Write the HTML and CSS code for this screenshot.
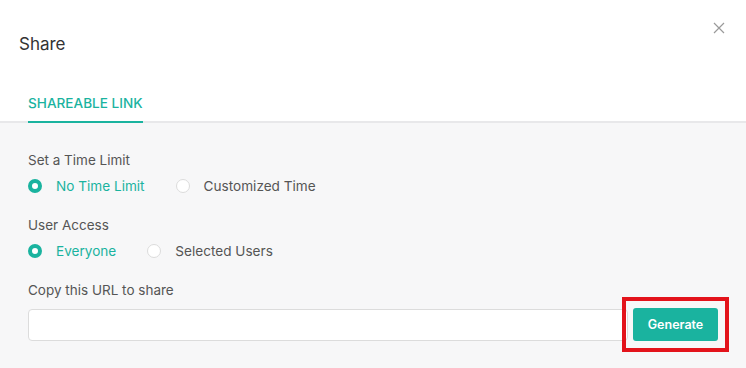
FILE: index.html
```html
<!DOCTYPE html>
<html lang="en">
<head>
    <meta charset="UTF-8">
    <meta name="viewport" content="width=device-width, initial-scale=1.0">
    <title>Share</title>
    <link rel="stylesheet" href="styles.css">
</head>
<body>

    <div class="modal">
        <!-- Cabecera -->
        <div class="modal-header">
            <h2 class="modal-title">Share</h2>
            <button class="close-btn" aria-label="Close">
                <svg width="12" height="12" viewBox="0 0 12 12">
                    <path d="M1 1 L11 11 M11 1 L1 11" stroke="#9a9a9a" stroke-width="1.2" fill="none"/>
                </svg>
            </button>
        </div>

        <div class="tabs">
            <span class="tab active">SHAREABLE LINK</span>
        </div>

        <!-- Contenido -->
        <div class="modal-body">
            <div class="group">
                <div class="group-label">Set a Time Limit</div>
                <div class="radio-row">
                    <label class="radio checked"><span class="dot"></span>No Time Limit</label>
                    <label class="radio"><span class="dot"></span>Customized Time</label>
                </div>
            </div>

            <div class="group">
                <div class="group-label">User Access</div>
                <div class="radio-row">
                    <label class="radio checked"><span class="dot"></span>Everyone</label>
                    <label class="radio"><span class="dot"></span>Selected Users</label>
                </div>
            </div>

            <div class="group">
                <div class="group-label url-label">Copy this URL to share</div>
                <div class="url-row">
                    <input type="text" class="url-input">
                    <div class="btn-wrap">
                        <button class="btn-generate">Generate</button>
                        <span class="highlight"></span>
                    </div>
                </div>
            </div>
        </div>
    </div>

</body>
</html>
```

FILE: styles.css
```css
/* General */
body {
    font-family: 'Inter', 'Liberation Sans', sans-serif;
    margin: 0;
    padding: 0;
    background-color: #f7f7f8;
    color: #555;
}

.modal {
    width: 746px;
    height: 368px;
    overflow: hidden;
    background-color: #f7f7f8;
}

/* Cabecera */
.modal-header {
    background-color: #fff;
    display: flex;
    justify-content: space-between;
    align-items: flex-start;
    padding: 30px 21px 0 19px;
    height: 48px;
}

.modal-title {
    margin: 0;
    font-size: 17px;
    font-weight: 400;
    line-height: 28px;
    color: #333;
}

.close-btn {
    background: none;
    border: none;
    padding: 0;
    margin-top: -8px;
    cursor: pointer;
    line-height: 0;
}

/* Pestañas */
.tabs {
    background-color: #fff;
    padding: 0 28px;
    border-bottom: 2px solid #e8e8ea;
    display: flex;
    height: 43px;
    align-items: flex-end;
}

.tab {
    font-size: 13.6px;
    font-weight: 500;
    color: #1ab39f;
    padding-bottom: 8px;
    line-height: 20px;
    border-bottom: 2px solid #1ab39f;
    margin-bottom: -2px;
}

/* Contenido */
.modal-body {
    padding: 27px 28px 0 28px;
}

.group {
    margin-bottom: 19px;
}

.group-label {
    font-size: 13.5px;
    line-height: 20px;
    margin-bottom: 6px;
    color: #555;
}

.url-label {
    margin-bottom: 8px;
}

.radio-row {
    display: flex;
    height: 20px;
    align-items: center;
}

.radio {
    display: flex;
    align-items: center;
    font-size: 13.6px;
    color: #555;
    margin-right: 31px;
    cursor: pointer;
}

.radio .dot {
    width: 12px;
    height: 12px;
    border-radius: 50%;
    border: 1px solid #dcdcdc;
    background-color: #fff;
    margin-right: 14px;
    box-sizing: content-box;
}

.radio.checked {
    color: #1ab39f;
}

.radio.checked .dot {
    width: 6px;
    height: 6px;
    border: 4px solid #1ab39f;
    background-color: #fff;
}

/* URL */
.url-row {
    display: flex;
    gap: 5px;
    align-items: center;
}

.url-input {
    flex: 1;
    height: 32px;
    box-sizing: border-box;
    border: 1px solid #dcdcdc;
    border-radius: 4px;
    background-color: #fff;
    font-size: 14px;
    padding: 0 10px;
    outline: none;
}

.btn-wrap {
    position: relative;
}

.btn-generate {
    width: 85px;
    height: 33px;
    background-color: #1ab39f;
    color: #fff;
    border: none;
    border-radius: 3px;
    font-family: inherit;
    font-size: 12.5px;
    font-weight: 600;
    cursor: pointer;
    display: block;
}

/* Marco rojo de resaltado */
.highlight {
    position: absolute;
    left: -11px;
    top: -11px;
    right: -11px;
    bottom: -11px;
    border: 4px solid #e3131b;
    pointer-events: none;
}
```
